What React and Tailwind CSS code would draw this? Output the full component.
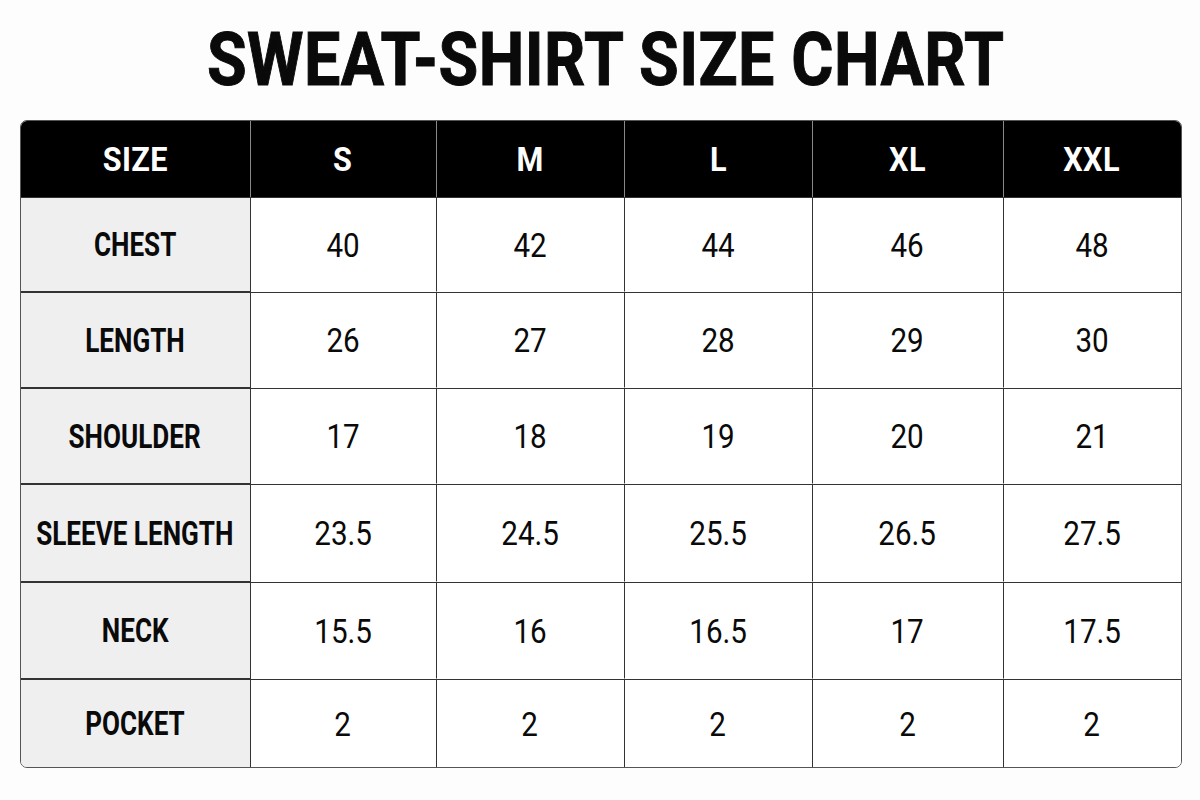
import React from "react";

const cols = ["S", "M", "L", "XL", "XXL"];
const rows = [
  ["CHEST", ["40", "42", "44", "46", "48"]],
  ["LENGTH", ["26", "27", "28", "29", "30"]],
  ["SHOULDER", ["17", "18", "19", "20", "21"]],
  ["SLEEVE LENGTH", ["23.5", "24.5", "25.5", "26.5", "27.5"]],
  ["NECK", ["15.5", "16", "16.5", "17", "17.5"]],
  ["POCKET", ["2", "2", "2", "2", "2"]],
];

export default function App() {
  return (
    <div
      className="w-[1200px] h-[800px] bg-[#fdfdfd] flex flex-col items-center"
      style={{ fontFamily: "Roboto, 'Liberation Sans', sans-serif" }}
    >
      <div className="h-[120px] w-full flex items-center justify-center pl-[12px] pb-[2px]">
        <span className="inline-block text-[75px] font-bold leading-none text-[#0a0a0a] scale-x-[0.86] tracking-[0.5px] whitespace-nowrap [-webkit-text-stroke:1px_#0a0a0a]">
          SWEAT-SHIRT SIZE CHART
        </span>
      </div>
      <div className="ml-[1px] w-[1162px] rounded-[7px] overflow-hidden border border-[#555] grid grid-cols-[230px_186px_188px_188px_191px_177px] grid-rows-[76px_95px_96px_96px_98px_97px_88px]">
        <div className="bg-black border-r border-[#888] flex items-center justify-center">
          <span className="inline-block text-white font-bold text-[34px] scale-x-[0.9] tracking-[0.5px] leading-none">SIZE</span>
        </div>
        {cols.map((c, i) => (
          <div
            key={c}
            className={"bg-black flex items-center justify-center " + (i < 4 ? "border-r border-[#888]" : "")}
          >
            <span className="inline-block text-white font-bold text-[34px] scale-x-[0.9] tracking-[0.5px] leading-none">{c}</span>
          </div>
        ))}
        {rows.map(([label, vals], ri) => (
          <React.Fragment key={label}>
            <div
              className={"bg-[#efefef] border-r border-[#333] flex items-center justify-center " + (ri < 5 ? "border-b" : "") + " border-t border-t-[#333]"}
            >
              <span className="inline-block text-[#0a0a0a] font-bold text-[33px] scale-x-[0.79] leading-none whitespace-nowrap">
                {label}
              </span>
            </div>
            {vals.map((v, i) => (
              <div
                key={i}
                className={
                  "bg-white flex items-center justify-center border-t border-t-[#333] " +
                  (i < 4 ? "border-r border-[#333] " : "") +
                  (ri < 5 ? "border-b border-b-transparent" : "")
                }
              >
                <span className="inline-block text-[#0a0a0a] text-[34px] scale-x-[0.87] leading-none">{v}</span>
              </div>
            ))}
          </React.Fragment>
        ))}
      </div>
    </div>
  );
}
